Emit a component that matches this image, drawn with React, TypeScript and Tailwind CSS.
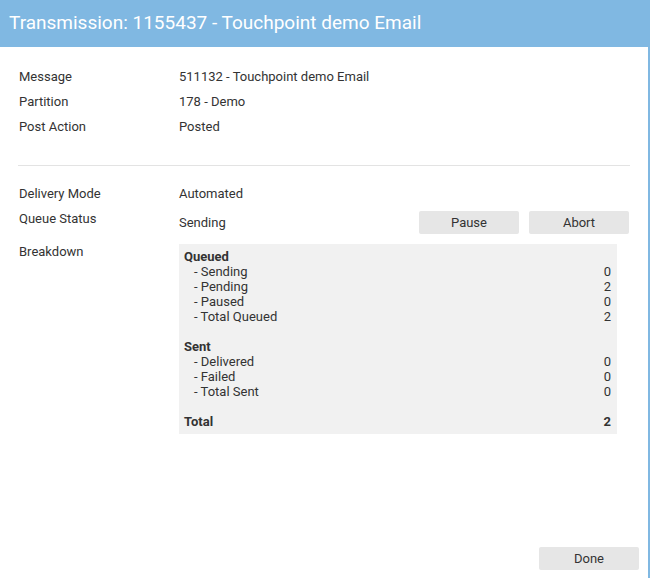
const rows = [
  { label: "Message", value: "511132 - Touchpoint demo Email" },
  { label: "Partition", value: "178 - Demo" },
  { label: "Post Action", value: "Posted" },
];

type Line = { text: string; count?: number; bold?: boolean; indent?: boolean; gap?: boolean };

const breakdown: Line[] = [
  { text: "Queued", bold: true },
  { text: "- Sending", count: 0, indent: true },
  { text: "- Pending", count: 2, indent: true },
  { text: "- Paused", count: 0, indent: true },
  { text: "- Total Queued", count: 2, indent: true },
  { text: "", gap: true },
  { text: "Sent", bold: true },
  { text: "- Delivered", count: 0, indent: true },
  { text: "- Failed", count: 0, indent: true },
  { text: "- Total Sent", count: 0, indent: true },
  { text: "", gap: true },
  { text: "Total", count: 2, bold: true },
];

export default function App() {
  return (
    <div
      className="w-[650px] h-[578px] bg-white flex flex-col text-[13px] text-[#333]"
      style={{ fontFamily: "Roboto, 'Liberation Sans', sans-serif" }}
    >
      <div className="h-[47px] bg-[#80b8e2] flex items-center pl-[9px] shrink-0">
        <h1 className="text-[19px] text-white leading-none pb-[2px]">Transmission: 1155437 - Touchpoint demo Email</h1>
      </div>
      <div className="flex-1 flex flex-col border-r-2 border-[#80b8e2]">
        <div className="px-[19px] pt-[17px]">
          {rows.map((r) => (
            <div key={r.label} className="flex h-[25px] items-center">
              <div className="w-[160px]">{r.label}</div>
              <div>{r.value}</div>
            </div>
          ))}
        </div>
        <div className="mx-[18px] mt-[26px] mb-[15px] h-px bg-[#e3e3e3] w-[612px]" />
        <div className="px-[19px]">
          <div className="flex h-[25px] items-center">
            <div className="w-[160px]">Delivery Mode</div>
            <div>Automated</div>
          </div>
          <div className="flex">
            <div className="w-[160px] h-[25px] flex items-center">Queue Status</div>
            <div className="flex-1 flex items-center h-[23px] mt-[5px]">
              <div className="flex-1">Sending</div>
              <button className="w-[100px] h-[23px] bg-[#e6e6e6] rounded-[2px] mr-[10px]">Pause</button>
              <button className="w-[100px] h-[23px] bg-[#e6e6e6] rounded-[2px]">Abort</button>
            </div>
          </div>
          <div className="flex mt-[10px] leading-[15px]">
            <div className="w-[160px]">Breakdown</div>
            <div className="w-[438px] bg-[#f1f1f1] px-[5px] pt-[5px] pb-[5px]">
              {breakdown.map((l, i) =>
                l.gap ? (
                  <div key={i} className="h-[15px]" />
                ) : (
                  <div key={i} className={`flex justify-between ${l.bold ? "font-bold" : ""}`}>
                    <span className={l.indent ? "pl-[10px]" : ""}>{l.text}</span>
                    {l.count !== undefined && <span className="pr-px">{l.count}</span>}
                  </div>
                )
              )}
            </div>
          </div>
        </div>
        <div className="flex-1" />
        <div className="flex justify-end pr-[9px] pb-[8px]">
          <button className="w-[100px] h-[23px] bg-[#e6e6e6] rounded-[2px]">Done</button>
        </div>
      </div>
    </div>
  );
}
